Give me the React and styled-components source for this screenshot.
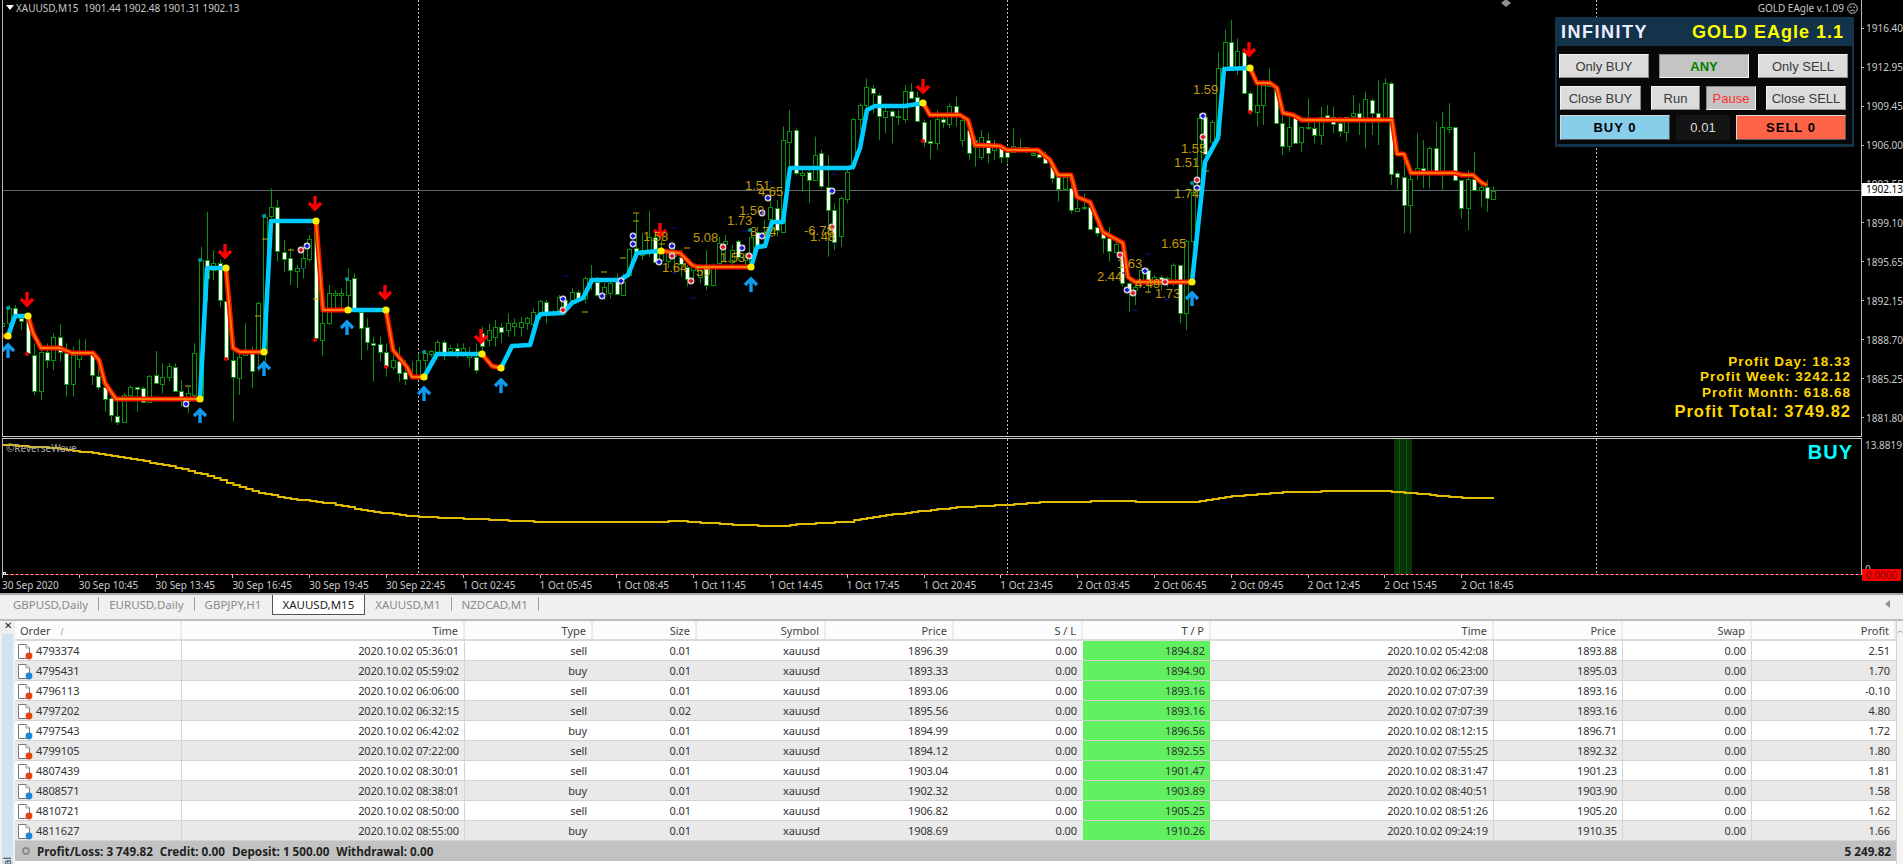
import React from "react";
import styled, { createGlobalStyle } from "styled-components";

const GlobalStyle = createGlobalStyle`
  html, body { margin: 0; padding: 0; background: #000; }
  * { box-sizing: border-box; }
`;

// candles, read off the chart: [wickTop, bodyTop, bodyBottom, wickBottom, white]
const candlesA = [
  [425,430,440,445],[375,385,430,460],[375,385,405,405,1],[405,413,422,450,1],[410,420,520,525,1],[490,525,633,645,1],[490,515,633,660],[490,515,540,565,1],[460,470,540,570],[433,470,515,545,1],
  [490,520,612,650,1],[500,525,612,650],[478,515,535,565],[478,515,520,525],[515,520,587,615,1],[530,587,620,630,1],[590,620,657,695,1],[640,655,707,725,1],[650,708,727,735,1],[640,645,727,727],
  [615,622,645,650],[620,622,627,695,1],[620,625,667,670,1],[585,588,667,667],[513,585,610,610,1],[550,590,610,640],[550,557,590,605],[550,560,632,635,1],[600,633,650,680,1],[620,640,665,700],
  [490,520,645,655],[200,240,650,650],[95,240,295,365,1],[210,250,270,300],[240,250,360,380,1],[360,362,535,540,1],[500,540,592,725,1],[510,530,592,645],[430,510,525,525],[500,520,575,625,1],
  [365,370,510,575],[100,110,510,550],[25,82,110,115],[60,82,215,245,1],[180,215,235,275,1],[205,235,272,315,1],[255,265,275,325],[215,235,265,295],[165,178,237,245],[125,130,475,480,1],
  [390,430,482,527],[315,340,430,435],[330,340,345,390],[325,340,345,395],[265,300,345,390],[280,295,385,395,1],[390,395,442,540,1],[415,440,485,510,1],[470,490,495,605,1],[470,493,517,545,1],
  [490,515,557,590,1],[505,540,562,570],[500,542,577,605,1],[540,577,597,615,1],[545,585,595,595],[520,540,585,600],[510,520,542,590],[510,513,522,530],[480,485,515,520],[480,485,515,540,1],
  [495,505,515,520],[490,505,515,535,1],[490,505,517,530],[500,515,530,560],[490,530,570,580,1],
];
const candlesB = [
  [800,820,860,880,1],[790,810,840,860],[780,800,830,860],[790,800,815,850,1],[760,790,810,830],[775,790,800,830],[770,785,800,830],[770,775,790,810],[745,755,790,800],[720,722,757,780],
  [720,725,760,790,1],[750,757,762,770],[705,710,750,755],[715,720,750,760,1],[685,695,720,730],[690,695,715,720,1],[650,655,715,730],[615,655,665,690],[650,665,705,710,1],[670,680,700,720],
  [665,670,700,715],[640,660,702,705,1],[640,665,705,705],[565,567,645,650],[460,565,580,600,1],[520,570,585,600],[452,530,575,590],[520,530,605,610,1],[540,575,600,610],[575,580,605,625],
  [560,580,590,640],[570,590,612,650,1],[615,620,655,680,1],[610,620,630,660],[620,630,650,670],[570,625,675,690,1],[610,615,675,680],[530,548,608,610],[525,542,550,610],[555,570,605,620],
  [540,542,590,600,1],[580,590,600,615],[510,530,605,610],[500,515,558,570,1],[480,515,530,560],[420,440,475,510],[420,445,512,530,1],[200,240,515,515],[150,212,245,330],[205,210,340,345,1],
  [330,340,345,395],[320,335,360,430,1],[230,285,360,360],[270,280,378,385,1],[285,380,450,590,1],[430,450,545,570,1],[410,415,530,560],[330,335,415,430],[175,178,320,330],[130,135,178,210],
  [55,82,137,160],[75,85,100,160,1],[100,105,167,240,1],[130,152,170,220],[150,152,168,250,1],[150,168,172,195],[75,92,175,190],[70,92,112,115,1],[95,112,185,185,1],[180,185,245,260,1],
  [180,243,250,298,1],[150,178,250,270],[160,178,188,205,1],[130,137,190,205],[110,138,160,200,1],[170,180,240,260],[200,210,280,300,1],[230,240,260,320,1],[210,230,290,300],[220,240,280,310,1],
  [240,260,270,300],
];
const candlesC = [
  [375,385,412,430,1],[395,395,410,430,1],[325,378,395,390],[355,380,385,395],[380,382,395,400],[395,398,405,410],[395,403,412,415,1],[395,410,428,430,1],[420,430,475,490,1],[465,472,507,545,1],
  [465,472,507,510],[465,505,572,580,1],[530,563,573,575],[520,560,564,570],[545,560,625,630,1],[590,622,640,650,1],[630,640,655,700,1],[620,655,693,725,1],[660,672,695,700],[670,700,790,800,1],
  [785,790,815,875,1],[780,800,810,855],[745,750,790,800],[745,750,790,820,1],[765,770,790,800],[765,770,790,810,1],[770,775,785,800],[730,735,785,800],[735,735,878,910,1],[660,662,878,930],
  [490,515,662,680],[280,295,510,520],[280,290,400,420,1],[300,305,365,400],[95,145,345,365],[30,65,145,145],[0,65,145,150,1],[55,92,145,165],[85,95,217,220,1],[215,220,275,285,1],
  [195,255,275,320],[180,195,255,315],[145,190,200,200],[195,200,308,310,1],[280,308,378,405,1],[290,320,378,395],[285,290,368,370,1],[320,322,368,395],[235,322,326,330],[305,325,345,370,1],
  [260,290,345,375],[255,285,295,300,1],[260,290,312,340,1],[290,310,335,350,1],[290,290,335,365],[225,278,288,300],[250,278,295,345,1],[215,238,295,385],[235,240,278,345,1],[180,278,292,375,1],
  [175,188,292,300],[185,188,460,495,1],[455,460,472,510,1],[420,470,555,640,1],[440,478,555,640],[340,445,455,480],[360,445,455,505,1],[380,383,455,505],[305,383,452,440,1],[275,322,455,510],
  [250,320,326,340],[320,322,480,480,1],[480,480,565,595,1],[450,478,565,630],[395,478,510,510,1],[490,502,510,560],[480,502,535,575,1],[500,512,535,540],
];

const fromA = (p) => 180 + p / 3;
const fromB = (p) => 60 + p / 3;
const fromC = (p) => 20 + p / 3;

const candles = [
  ...candlesA.map((c) => ({ c, f: fromA })),
  ...candlesB.map((c) => ({ c, f: fromB })),
  ...candlesC.map((c) => ({ c, f: fromC })),
];

const lineSegments = [
  { up: false, pts: "3,336 8,336" },
  { up: true, pts: "8,336 15,316 28,316" },
  { up: false, pts: "28,316 33,333 41,348 60,348 72,353 93,353 99,360 105,383 116,399 200,399" },
  { up: true, pts: "200,399 207,268 226,268" },
  { up: false, pts: "226,268 233,348 240,352 264,352" },
  { up: true, pts: "264,352 271,221 316,221" },
  { up: false, pts: "316,221 323,310 348,310" },
  { up: true, pts: "348,310 386,310" },
  { up: false, pts: "386,310 393,350 407,367 412,377 424,377" },
  { up: true, pts: "424,377 437,354 482,354" },
  { up: false, pts: "482,354 492,366 501,368" },
  { up: true, pts: "501,368 512,346 530,345 538,317 541,314 563,313 572,303 583,298 592,280 620,280 628,275 637,253 658,251 661,251" },
  { up: false, pts: "661,251 680,253 692,265 697,267 751,267" },
  { up: true, pts: "751,267 757,247 765,246 772,222 783,222 790,168 848,168 853,167 860,148 867,110 875,106 905,106 923,103" },
  { up: false, pts: "923,103 930,115 960,115 968,120 975,145 1000,146 1007,150 1038,150 1050,160 1058,175 1071,175 1077,197 1090,202 1103,232 1123,243 1128,277 1135,282 1192,282" },
  { up: true, pts: "1192,282 1205,162 1218,138 1224,69 1250,68" },
  { up: false, pts: "1250,68 1257,83 1270,83 1277,88 1283,113 1293,115 1302,120 1392,120 1397,154 1404,154 1411,173 1455,173 1462,175 1473,175 1482,183 1487,185" },
];

const turnDots = [[8,336],[28,316],[200,399],[226,268],[264,352],[316,221],[348,310],[386,310],[424,377],[482,354],[501,368],[661,251],[751,267],[923,103],[1192,282],[1250,68]];
const downArrows = [[27,299],[225,251],[315,203],[385,292],[481,336],[660,230],[923,86],[1249,49]];
const upArrows = [[8,351],[200,416],[264,369],[347,328],[424,394],[501,386],[751,285],[1192,299]];

const priceTags = [
  ["1.51",745,185],["4.65",758,191],["1.50",739,210],["1.73",727,220],["8",750,231],["74",762,231],["5.08",693,237],["1.53",720,257],["1.58",643,236],["1.64",662,267],["50",696,271],["-6.78",804,230],["1.48",810,236],
  ["1.59",1193,89],["1.55",1181,148],["1.51",1174,162],["1.74",1174,193],["1.65",1161,243],["1.63",1117,263],["2.44",1097,276],["4.49",1135,283],["1.73",1155,293],
];

const blueMarks = [[186,404],[307,246],[633,236],[633,244],[672,246],[659,262],[621,281],[602,296],[563,299],[762,213],[762,236],[768,198],[742,248],[832,191],[1203,116],[1197,188],[1145,271],[1127,290]];
const redMarks = [[301,250],[672,256],[691,281],[723,247],[749,256],[563,310],[832,227],[1203,137],[1197,180],[1120,255],[1133,293],[1165,282]];
const redDots = [[27,354],[226,359],[315,340],[386,367],[923,141],[1250,112]];
const tealDots = [[8,308],[200,260],[264,216],[347,279],[424,352],[750,230],[1192,183]];
const yellowDashes = [[188,386],[291,250],[265,239],[258,316],[316,299],[636,213],[636,221],[623,258],[604,272],[585,312],[687,248],[662,244],[770,236],[1206,171],[1148,292]];
const blueDashes = [[309,229],[303,268],[566,276],[674,228],[693,298],[674,273],[770,182],[834,174],[834,244],[745,231],[1148,254],[1135,310],[1167,299],[1125,273]];

const priceAxis = ["1916.40","1912.95","1909.45","1906.00","1902.55","1899.10","1895.65","1892.15","1888.70","1885.25","1881.80"];
const timeAxis = ["30 Sep 2020","30 Sep 10:45","30 Sep 13:45","30 Sep 16:45","30 Sep 19:45","30 Sep 22:45","1 Oct 02:45","1 Oct 05:45","1 Oct 08:45","1 Oct 11:45","1 Oct 14:45","1 Oct 17:45","1 Oct 20:45","1 Oct 23:45","2 Oct 03:45","2 Oct 06:45","2 Oct 09:45","2 Oct 12:45","2 Oct 15:45","2 Oct 18:45"];

const waveKnots = [[3,445],[51,448],[122,457],[173,467],[219,479],[235,486],[260,493],[291,499],[327,503],[367,511],[418,517],[474,519],[541,522],[648,522],[679,521],[735,525],[781,526],[800,524],[846,522],[877,516],[922,511],[958,507],[1004,505],[1045,502],[1132,501],[1137,502],[1193,502],[1234,496],[1285,492],[1351,491],[1384,491],[1397,492],[1463,498],[1494,498]];

// the indicator is drawn per bar, so it comes out in small steps
function wavePath() {
  let d = "";
  let k = 0;
  for (let x = 3; x <= 1494; x += 6.4) {
    while (k < waveKnots.length - 2 && waveKnots[k + 1][0] < x) k++;
    const [x0, y0] = waveKnots[k];
    const [x1, y1] = waveKnots[k + 1];
    const y = Math.round(y0 + ((y1 - y0) * (x - x0)) / (x1 - x0));
    d += d ? `H${x.toFixed(1)}V${y}` : `M${x},${y}`;
  }
  return d + "H1494";
}

const tabs = ["GBPUSD,Daily", "EURUSD,Daily", "GBPJPY,H1", "XAUUSD,M15", "XAUUSD,M1", "NZDCAD,M1"];

const headers = [["Order", "left"], ["Time"], ["Type"], ["Size"], ["Symbol"], ["Price"], ["S / L"], ["T / P"], ["Time"], ["Price"], ["Swap"], ["Profit"]];

const orders = [
  ["4793374","05:36:01","sell","0.01","1896.39","1894.82","05:42:08","1893.88","2.51"],
  ["4795431","05:59:02","buy","0.01","1893.33","1894.90","06:23:00","1895.03","1.70"],
  ["4796113","06:06:00","sell","0.01","1893.06","1893.16","07:07:39","1893.16","-0.10"],
  ["4797202","06:32:15","sell","0.02","1895.56","1893.16","07:07:39","1893.16","4.80"],
  ["4797543","06:42:02","buy","0.01","1894.99","1896.56","08:12:15","1896.71","1.72"],
  ["4799105","07:22:00","sell","0.01","1894.12","1892.55","07:55:25","1892.32","1.80"],
  ["4807439","08:30:01","sell","0.01","1903.04","1901.47","08:31:47","1901.23","1.81"],
  ["4808571","08:38:01","buy","0.01","1902.32","1903.89","08:40:51","1903.90","1.58"],
  ["4810721","08:50:00","sell","0.01","1906.82","1905.25","08:51:26","1905.20","1.62"],
  ["4811627","08:55:00","buy","0.01","1908.69","1910.26","09:24:19","1910.35","1.66"],
];

const uiFont = `"Noto Sans", "Open Sans", sans-serif`;
const panelFont = `"Liberation Sans", Arial, sans-serif`;
const gridCols = "167px 283px 128px 104px 129px 128px 129px 128px 283px 129px 129px 144px";

const Page = styled.div`
  width: 1903px;
  height: 864px;
  overflow: hidden;
  display: flex;
  flex-direction: column;
  background: #f0f0f0;
  font-family: ${uiFont};
`;

const ChartArea = styled.div`
  position: relative;
  height: 593px;
  flex: none;
  background: #000;
  display: grid;
  grid-template-columns: 1862px 41px;
  grid-template-rows: 437px 138px 18px;
  color: #c8c8c8;
  font-size: 10px;
`;

const MainPane = styled.div`
  margin-left: 2px;
  border-left: 1px solid #b8b8b8;
  border-right: 1px solid #b8b8b8;
  border-bottom: 1px solid #c8c8c8;
  line-height: 0;
`;

const WavePane = styled.div`
  position: relative;
  margin: 1px 0 0 2px;
  border-top: 1px solid #c8c8c8;
  border-left: 1px solid #b8b8b8;
  border-right: 1px solid #b8b8b8;
  line-height: 0;
`;

const PriceAxis = styled.div`
  padding-top: 9px;
  display: flex;
  flex-direction: column;
`;

const PriceTick = styled.div`
  height: 39.2px;
  display: flex;
  align-items: center;
  line-height: 1;
  &::before {
    content: "";
    width: 3px;
    height: 1px;
    margin-right: 2px;
    background: #c0c0c0;
  }
`;

const WaveAxis = styled.div`
  display: flex;
  flex-direction: column;
  justify-content: space-between;
  padding: 2px 0 0 3px;
  height: 138px;
  line-height: 12px;
`;

const TimeAxis = styled.div`
  grid-column: 1 / 3;
  padding-left: 2px;
  display: grid;
  grid-auto-flow: column;
  grid-auto-columns: 76.8px;
  justify-content: start;
`;

const TimeCell = styled.div`
  line-height: 14px;
  white-space: nowrap;
  &::before {
    content: "";
    display: block;
    width: 1px;
    height: 3px;
    background: #c0c0c0;
  }
`;

const SymbolLine = styled.div`
  position: absolute;
  left: 16px;
  top: 1px;
  white-space: pre;
  line-height: 14px;
  color: #c8c8c8;
  &::before {
    content: "";
    position: absolute;
    left: -10px;
    top: 4px;
    border: 4px solid transparent;
    border-top: 5px solid #fff;
    border-bottom: 0;
  }
`;

const ExpertName = styled.div`
  position: absolute;
  right: 45px;
  top: 1px;
  display: flex;
  align-items: center;
  gap: 3px;
  line-height: 14px;
  color: #c8c8c8;
`;

const PriceTag = styled.div`
  position: absolute;
  left: 1862px;
  top: 183px;
  width: 41px;
  height: 13px;
  background: #fff;
  color: #000;
  line-height: 13px;
  padding-left: 4px;
`;

const ZeroTag = styled.div`
  position: absolute;
  left: 1862px;
  top: 569px;
  width: 39px;
  height: 12px;
  background: #ff0000;
  color: #7a0000;
  line-height: 12px;
  padding-left: 4px;
`;

const WaveLabel = styled.div`
  position: absolute;
  left: 3px;
  top: 3px;
  font-size: 10px;
  line-height: 12px;
  color: #a8a8a8;
`;

const Panel = styled.div`
  position: absolute;
  left: 1555px;
  top: 17px;
  width: 299px;
  height: 130px;
  background: #12334a;
  padding: 0 2px 3px;
  display: flex;
  flex-direction: column;
  font-family: ${panelFont};
`;

const PanelTitle = styled.div`
  height: 29px;
  padding: 1px 8px 0 4px;
  display: flex;
  justify-content: space-between;
  align-items: center;
  font-size: 18px;
  font-weight: 700;
  letter-spacing: 1px;
`;

const PanelName = styled.span`
  color: #eceeff;
  letter-spacing: 1.5px;
`;

const PanelProduct = styled.span`
  color: #ffff00;
`;

const PanelBody = styled.div`
  flex: 1;
  background: #080808;
  padding: 8px 0 0 2px;
  display: flex;
  flex-direction: column;
`;

const ButtonRow = styled.div`
  display: flex;
  height: ${(p) => p.$h || 24}px;
  margin-top: ${(p) => p.$top || 0}px;
  margin-left: ${(p) => p.$left || 0}px;
`;

const PanelButton = styled.div`
  width: ${(p) => p.$w}px;
  margin-left: ${(p) => p.$ml || 0}px;
  display: flex;
  align-items: center;
  justify-content: center;
  background: ${(p) => (p.$pressed ? "#c4c4c4" : "#dcdcdc")};
  color: ${(p) => p.$color || "#3a3a3a"};
  font-size: 13px;
  font-weight: ${(p) => (p.$bold ? 700 : 400)};
  border: 1px solid;
  border-color: ${(p) => (p.$pressed ? "#8a8a8a #f4f4f4 #f4f4f4 #8a8a8a" : "#f4f4f4 #8a8a8a #8a8a8a #f4f4f4")};
`;

const TradeButton = styled.div`
  width: 110px;
  display: flex;
  align-items: center;
  justify-content: center;
  background: ${(p) => p.$bg};
  color: #000;
  font-size: 13px;
  font-weight: 700;
  letter-spacing: 1px;
  border: 1px solid;
  border-color: #d8d8d8 #5a5a5a #5a5a5a #d8d8d8;
`;

const LotBox = styled.div`
  width: 54px;
  margin: 0 6px;
  display: flex;
  align-items: center;
  justify-content: center;
  background: #141414;
  color: #dcdcdc;
  font-size: 13px;
`;

const ProfitBlock = styled.div`
  position: absolute;
  right: 52px;
  top: 354px;
  display: flex;
  flex-direction: column;
  align-items: flex-end;
  font-family: ${panelFont};
  font-weight: 700;
  font-size: 13.5px;
  letter-spacing: 1px;
  line-height: 15.4px;
  color: #ffd700;
`;

const ProfitTotal = styled.div`
  font-size: 16.5px;
  line-height: 20px;
  margin-top: 1px;
`;

const SignalText = styled.div`
  position: absolute;
  right: 50px;
  top: 441px;
  font-family: ${panelFont};
  font-weight: 700;
  font-size: 20px;
  letter-spacing: 1px;
  line-height: 23px;
  color: #00ffff;
`;

const TabStrip = styled.div`
  height: 22px;
  flex: none;
  padding-left: 3px;
  border-top: 2px solid #a8a8a8;
  display: flex;
  align-items: flex-start;
  position: relative;
  font-size: 11.5px;
`;

const Tab = styled.div`
  position: relative;
  height: 20px;
  padding: 0 10px 0 9px;
  line-height: 19px;
  white-space: nowrap;
  color: ${(p) => (p.$active ? "#222" : "#8a8a8a")};
  background: ${(p) => (p.$active ? "#fff" : "transparent")};
  border-right: 1px solid ${(p) => (p.$active ? "#555" : "transparent")};
  border-left: 1px solid ${(p) => (p.$active ? "#555" : "transparent")};
  border-bottom: ${(p) => (p.$active ? "1px solid #555" : "0")};
  &::after {
    content: "";
    display: ${(p) => (p.$sep ? "block" : "none")};
    position: absolute;
    right: -1px;
    top: 2px;
    width: 1px;
    height: 14px;
    background: #a0a0a0;
  }
`;

const TabScroll = styled.div`
  position: absolute;
  right: 13px;
  top: 5px;
  border: 4px solid transparent;
  border-right: 5px solid #909090;
  border-left: 0;
`;

const TerminalBody = styled.div`
  flex: 1;
  display: flex;
  border-top: 2px solid #bdbdbd;
  margin-top: 4px;
  background: #fff;
`;

const SideStrip = styled.div`
  width: 15px;
  background: #f0f0f0;
  display: flex;
  flex-direction: column;
  padding: 0 2px;
`;

const CloseMark = styled.div`
  height: 13px;
  font-size: 10px;
  line-height: 8px;
  text-align: center;
  color: #222;
`;

const SideLabel = styled.div`
  flex: 1;
  background: #d3e2f0;
  position: relative;
  overflow: hidden;
`;

const SideText = styled.span`
  position: absolute;
  left: 0;
  bottom: -34px;
  writing-mode: vertical-rl;
  transform: rotate(180deg);
  font-size: 10px;
  line-height: 11px;
  color: #333;
`;

const TableWrap = styled.div`
  width: 1881px;
  display: flex;
  flex-direction: column;
`;

const HeaderRow = styled.div`
  display: grid;
  grid-template-columns: ${gridCols};
  grid-template-rows: 18px;
  height: 20px;
  border-bottom: 2px solid #dadada;
  background: #fcfcfc;
`;

const HeaderCell = styled.div`
  font-size: 11px;
  line-height: 19px;
  padding: 0 5px;
  color: #444;
  text-align: ${(p) => p.$align || "right"};
  border-right: 2px solid #ececec;
`;

const SortMark = styled.span`
  margin-left: 10px;
  font-size: 8px;
  color: #999;
`;

const OrderRow = styled.div`
  display: grid;
  grid-template-columns: ${gridCols};
  grid-template-rows: 19px;
  height: 20px;
  background: ${(p) => (p.$alt ? "#e9e9e9" : "#fff")};
  border-bottom: 1px solid #d4d4d4;
`;

const Cell = styled.div`
  font-size: 11px;
  line-height: 18px;
  padding: 1px 5px 0;
  letter-spacing: -0.1px;
  color: #333;
  text-align: right;
  background: ${(p) => (p.$hit ? "#60f060" : "transparent")};
  border-right: 1px solid ${(p) => (p.$hit ? "#fff" : p.$line ? "#d4d4d4" : "transparent")};
`;

const OrderCell = styled(Cell)`
  display: flex;
  align-items: center;
  gap: 3px;
  padding-left: 2px;
  text-align: left;
`;

const Totals = styled.div`
  height: 20px;
  background: #c2c2c2;
  display: flex;
  align-items: center;
  padding: 0 5px 0 7px;
  font-size: 11.7px;
  font-weight: 700;
  color: #222;
`;

const TotalsDot = styled.span`
  width: 8px;
  height: 8px;
  margin-right: 7px;
  border-radius: 50%;
  border: 2px solid #8c8c8c;
`;

const TotalsItem = styled.span`
  margin-right: 7px;
  white-space: pre;
`;

const TotalsSum = styled.span`
  margin-left: auto;
`;

const ScrollBar = styled.div`
  width: 7px;
  background: #f4f4f4;
  border-left: 1px solid #d4d4d4;
  text-align: center;
  font-size: 7px;
  line-height: 20px;
  color: #555;
`;

function Arrow({ x, y, up }) {
  const dir = up ? -1 : 1;
  return (
    <path
      d={`M${x},${y - 7 * dir} L${x},${y + 6 * dir} M${x - 6},${y} L${x},${y + 6 * dir} L${x + 6},${y}`}
      fill="none"
      stroke={up ? "#1199ee" : "#ff0000"}
      strokeWidth="3.4"
    />
  );
}

function Mark({ x, y, color }) {
  return (
    <g>
      <circle cx={x} cy={y} r="3.4" fill="#d8d8d8" />
      <path d={`M${x},${y - 2.6} L${x + 2.6},${y} L${x},${y + 2.6} L${x - 2.6},${y} Z`} fill={color} />
    </g>
  );
}

function Candle({ x, y }) {
  const [top, bodyTop, bodyBottom, bottom, white] = y;
  const cx = Math.round(x) + 0.5;
  return (
    <g>
      <line x1={cx} x2={cx} y1={top} y2={bottom} stroke="#0a900a" />
      <rect x={cx - 2} y={Math.round(bodyTop) + 0.5} width="4" height={Math.max(1, Math.round(bodyBottom - bodyTop))} fill={white ? "#fff" : "#000"} stroke="#0a900a" />
    </g>
  );
}

function PriceChart() {
  return (
    <svg width="1858" height="436" viewBox="3 0 1858 436" fontFamily={panelFont}>
      {[418.5, 1007.5, 1596.5].map((x) => (
        <line key={x} x1={x} x2={x} y1="0" y2="436" stroke="#c0c0c0" strokeDasharray="2 2" />
      ))}
      <line x1="3" x2="1861" y1="190.5" y2="190.5" stroke="#5e666c" />
      <path d="M1506,-1 l5,4 -5,4 -5,-4 Z" fill="#8a8f96" />
      {candles.map(({ c, f }, i) => (
        <Candle key={i} x={2.1 + 6.4 * i} y={[f(c[0]), f(c[1]), f(c[2]), f(c[3]), c[4]]} />
      ))}
      {yellowDashes.map(([x, y], i) => <line key={i} x1={x - 3} x2={x + 3} y1={y} y2={y} stroke="#c8a800" />)}
      {blueDashes.map(([x, y], i) => <line key={i} x1={x - 3} x2={x + 3} y1={y} y2={y} stroke="#10108c" />)}
      {lineSegments.map((s, i) =>
        s.up ? (
          <polyline key={i} points={s.pts} fill="none" stroke="#00ccff" strokeWidth="4.6" strokeLinejoin="round" />
        ) : (
          <g key={i}>
            <polyline points={s.pts} fill="none" stroke="#f81000" strokeWidth="5" strokeLinejoin="round" />
            <polyline points={s.pts} fill="none" stroke="#ff7a00" strokeWidth="1.8" strokeLinejoin="round" />
          </g>
        )
      )}
      {redDots.map(([x, y], i) => <circle key={i} cx={x} cy={y} r="2" fill="#e80000" />)}
      {tealDots.map(([x, y], i) => <circle key={i} cx={x} cy={y} r="2" fill="#0099aa" />)}
      {blueMarks.map(([x, y], i) => <Mark key={i} x={x} y={y} color="#1414e0" />)}
      {redMarks.map(([x, y], i) => <Mark key={i} x={x} y={y} color="#e81020" />)}
      {turnDots.map(([x, y], i) => <circle key={i} cx={x} cy={y} r="3.6" fill="#ffee00" />)}
      {downArrows.map(([x, y], i) => <Arrow key={i} x={x} y={y} />)}
      {upArrows.map(([x, y], i) => <Arrow key={i} x={x} y={y} up />)}
      {priceTags.map(([t, x, y], i) => (
        <text key={i} x={x} y={y + 5} fontSize="13" fill="#c09a08">{t}</text>
      ))}
    </svg>
  );
}

function WaveChart() {
  return (
    <svg width="1858" height="136" viewBox="3 439 1858 136">
      <rect x="1394" y="439" width="18" height="136" fill="#063406" />
      <rect x="1399" y="439" width="1" height="136" fill="#0a5a0a" />
      <rect x="1406" y="439" width="1" height="136" fill="#0a5a0a" />
      <line x1="418.5" x2="418.5" y1="439" y2="574" stroke="#c0c0c0" strokeDasharray="2 2" />
      <line x1="1007.5" x2="1007.5" y1="439" y2="574" stroke="#c0c0c0" strokeDasharray="2 2" />
      <line x1="1596.5" x2="1596.5" y1="439" y2="574" stroke="#c0c0c0" strokeDasharray="2 2" />
      <path d={wavePath()} fill="none" stroke="#e0bc00" strokeWidth="2" />
      <line x1="3" x2="1861" y1="574.5" y2="574.5" stroke="#d8d8d8" />
      <line x1="3" x2="1861" y1="574.5" y2="574.5" stroke="#e01010" strokeDasharray="3 2" />
      <rect x="3.5" y="572.5" width="2" height="2" fill="#000" stroke="#fff" />
    </svg>
  );
}

function OrderIcon({ sell }) {
  return (
    <svg width="16" height="17" viewBox="0 0 16 17">
      <path d="M1.5,1.5 H9 L12.5,5 V15.5 H1.5 Z" fill="#fff" stroke="#777" />
      <path d="M9,1.5 V5 H12.5" fill="#eee" stroke="#999" />
      <circle cx="12" cy="13" r="3.4" fill={sell ? "#e4420f" : "#1a86d6"} />
    </svg>
  );
}

function SadFace() {
  return (
    <svg width="11" height="11" viewBox="0 0 11 11" fill="none" stroke="#c8c8c8">
      <circle cx="5.5" cy="5.5" r="4.8" />
      <circle cx="3.8" cy="4.2" r="0.5" />
      <circle cx="7.2" cy="4.2" r="0.5" />
      <path d="M3.2,8 Q5.5,6 7.8,8" />
    </svg>
  );
}

export default function App() {
  return (
    <Page>
      <GlobalStyle />
      <ChartArea>
        <MainPane>
          <PriceChart />
        </MainPane>
        <PriceAxis>
          {priceAxis.map((p) => <PriceTick key={p}>{p}</PriceTick>)}
        </PriceAxis>
        <WavePane>
          <WaveChart />
          <WaveLabel>©ReverseWave</WaveLabel>
        </WavePane>
        <WaveAxis>
          <span>13.8819</span>
          <span>0</span>
        </WaveAxis>
        <TimeAxis>
          {timeAxis.map((t) => <TimeCell key={t}>{t}</TimeCell>)}
        </TimeAxis>

        <SymbolLine>{"XAUUSD,M15  1901.44 1902.48 1901.31 1902.13"}</SymbolLine>
        <ExpertName>GOLD EAgle v.1.09 <SadFace /></ExpertName>
        <PriceTag>1902.13</PriceTag>
        <ZeroTag>0.0000</ZeroTag>

        <Panel>
          <PanelTitle>
            <PanelName>INFINITY</PanelName>
            <PanelProduct>GOLD EAgle 1.1</PanelProduct>
          </PanelTitle>
          <PanelBody>
            <ButtonRow>
              <PanelButton $w={90}>Only BUY</PanelButton>
              <PanelButton $w={90} $ml={10} $pressed $bold $color="#008000">ANY</PanelButton>
              <PanelButton $w={90} $ml={9}>Only SELL</PanelButton>
            </ButtonRow>
            <ButtonRow $top={8} $left={1}>
              <PanelButton $w={81}>Close BUY</PanelButton>
              <PanelButton $w={49} $ml={10}>Run</PanelButton>
              <PanelButton $w={50} $ml={6} $pressed $color="#ff3030">Pause</PanelButton>
              <PanelButton $w={80} $ml={10}>Close SELL</PanelButton>
            </ButtonRow>
            <ButtonRow $top={5} $left={1} $h={25}>
              <TradeButton $bg="#87ceeb">BUY 0</TradeButton>
              <LotBox>0.01</LotBox>
              <TradeButton $bg="#ff6347">SELL 0</TradeButton>
            </ButtonRow>
          </PanelBody>
        </Panel>

        <ProfitBlock>
          <div>Profit Day: 18.33</div>
          <div>Profit Week: 3242.12</div>
          <div>Profit Month: 618.68</div>
          <ProfitTotal>Profit Total: 3749.82</ProfitTotal>
        </ProfitBlock>
        <SignalText>BUY</SignalText>
      </ChartArea>

      <TabStrip>
        {tabs.map((t, i) => (
          <Tab key={t} $active={t === "XAUUSD,M15"} $sep={i !== 2 && i !== 3}>
            {t}
          </Tab>
        ))}
        <TabScroll />
      </TabStrip>

      <TerminalBody>
        <SideStrip>
          <CloseMark>✕</CloseMark>
          <SideLabel><SideText>Terminal</SideText></SideLabel>
        </SideStrip>
        <TableWrap>
          <HeaderRow>
            {headers.map(([h, align], i) => (
              <HeaderCell key={i} $align={align}>
                {h}
                {i === 0 && <SortMark>/</SortMark>}
              </HeaderCell>
            ))}
          </HeaderRow>
          {orders.map((o, i) => (
            <OrderRow key={o[0]} $alt={i % 2 === 1}>
              <OrderCell $line>
                <OrderIcon sell={o[2] === "sell"} />
                {o[0]}
              </OrderCell>
              <Cell $line>2020.10.02 {o[1]}</Cell>
              <Cell>{o[2]}</Cell>
              <Cell>{o[3]}</Cell>
              <Cell>xauusd</Cell>
              <Cell>{o[4]}</Cell>
              <Cell>0.00</Cell>
              <Cell $hit>{o[5]}</Cell>
              <Cell $line>2020.10.02 {o[6]}</Cell>
              <Cell $line>{o[7]}</Cell>
              <Cell $line>0.00</Cell>
              <Cell>{o[8]}</Cell>
            </OrderRow>
          ))}
          <Totals>
            <TotalsDot />
            <TotalsItem>Profit/Loss: 3 749.82</TotalsItem>
            <TotalsItem>Credit: 0.00</TotalsItem>
            <TotalsItem>Deposit: 1 500.00</TotalsItem>
            <TotalsItem>Withdrawal: 0.00</TotalsItem>
            <TotalsSum>5 249.82</TotalsSum>
          </Totals>
        </TableWrap>
        <ScrollBar>︿</ScrollBar>
      </TerminalBody>
    </Page>
  );
}
